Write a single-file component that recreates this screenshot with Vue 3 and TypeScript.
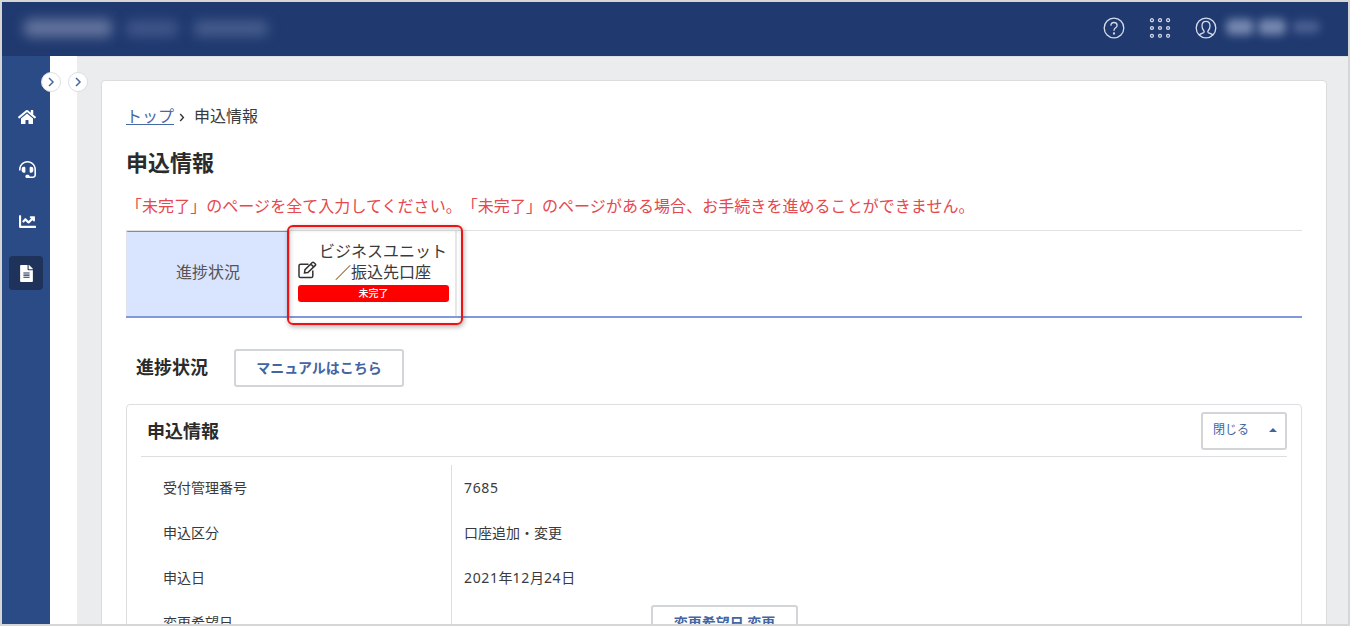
<script setup lang="ts">
interface NavItem {
  name: string
  box: string
  width: number
  height: number
  path: string
  active?: boolean
}

interface DetailRow {
  label: string
  value: string
  button?: string
}

const navItems: NavItem[] = [
  {
    name: 'home',
    box: '0 0 576 512',
    width: 18,
    height: 16,
    path: 'M280.37 148.26L96 300.11V464a16 16 0 0 0 16 16l112.06-.29a16 16 0 0 0 15.92-16V368a16 16 0 0 1 16-16h64a16 16 0 0 1 16 16v95.64a16 16 0 0 0 16 16.05L464 480a16 16 0 0 0 16-16V300L295.67 148.26a12.19 12.19 0 0 0-15.3 0zM571.6 251.47L488 182.56V44.05a12 12 0 0 0-12-12h-56a12 12 0 0 0-12 12v72.61L318.47 43a48 48 0 0 0-61 0L4.34 251.47a12 12 0 0 0-1.6 16.9l25.5 31A12 12 0 0 0 45.15 301l235.22-193.74a12.19 12.19 0 0 1 15.3 0L530.9 301a12 12 0 0 0 16.9-1.6l25.5-31a12 12 0 0 0-1.7-16.93z'
  },
  {
    name: 'support',
    box: '0 0 512 512',
    width: 17,
    height: 17,
    path: 'M192 208c0-17.67-14.33-32-32-32h-16c-35.35 0-64 28.65-64 64v48c0 35.35 28.65 64 64 64h16c17.67 0 32-14.33 32-32V208zm176 144c35.35 0 64-28.65 64-64v-48c0-35.35-28.65-64-64-64h-16c-17.67 0-32 14.33-32 32v112c0 17.67 14.33 32 32 32h16zM256 0C113.18 0 4.58 118.83 0 256v16c0 8.84 7.16 16 16 16h16c8.84 0 16-7.16 16-16v-16c0-114.69 93.31-208 208-208s208 93.31 208 208h-.12c.08 2.43.12 165.72.12 165.72 0 23.35-18.93 42.28-42.28 42.28H320c0-26.51-21.49-48-48-48h-32c-26.51 0-48 21.49-48 48s21.49 48 48 48h181.72c49.86 0 90.28-40.42 90.28-90.28V256C507.42 118.83 398.82 0 256 0z'
  },
  {
    name: 'chart',
    box: '0 0 512 512',
    width: 17,
    height: 17,
    path: 'M496 384H64V80c0-8.84-7.16-16-16-16H16C7.16 64 0 71.16 0 80v336c0 17.67 14.33 32 32 32h464c8.84 0 16-7.16 16-16v-32c0-8.84-7.16-16-16-16zM464 96H345.94c-21.38 0-32.09 25.85-16.97 40.97l32.4 32.4L288 242.75l-73.37-73.37c-12.5-12.5-32.76-12.5-45.25 0l-68.69 68.69c-6.25 6.25-6.25 16.38 0 22.63l22.62 22.62c6.25 6.25 16.38 6.25 22.63 0L192 237.25l73.37 73.37c12.5 12.5 32.76 12.5 45.25 0l96-96 32.4 32.4c15.12 15.12 40.97 4.41 40.97-16.97V112c.01-8.84-7.15-16-16-16z'
  },
  {
    name: 'document',
    box: '0 0 384 512',
    width: 13,
    height: 17,
    path: 'M224 136V0H24C10.7 0 0 10.7 0 24v464c0 13.3 10.7 24 24 24h336c13.3 0 24-10.7 24-24V160H248c-13.2 0-24-10.8-24-24zm64 236c0 6.6-5.4 12-12 12H108c-6.6 0-12-5.4-12-12v-8c0-6.6 5.4-12 12-12h168c6.6 0 12 5.4 12 12v8zm0-64c0 6.6-5.4 12-12 12H108c-6.6 0-12-5.4-12-12v-8c0-6.6 5.4-12 12-12h168c6.6 0 12 5.4 12 12v8zm0-72v8c0 6.6-5.4 12-12 12H108c-6.6 0-12-5.4-12-12v-8c0-6.6 5.4-12 12-12h168c6.6 0 12 5.4 12 12zm96-114.1v6.1H256V0h6.1c6.4 0 12.5 2.5 17 7l97.9 98c4.5 4.5 7 10.6 7 16.9z',
    active: true
  }
]

const rows: DetailRow[] = [
  { label: '受付管理番号', value: '7685' },
  { label: '申込区分', value: '口座追加・変更' },
  { label: '申込日', value: '2021年12月24日' },
  { label: '変更希望日', value: '', button: '変更希望日 変更' }
]

const dots = [3, 11, 19].flatMap((y) => [3, 11.2, 19.4].map((x) => ({ x, y })))

// Separates digits from kanji so digits can be tracked a little wider.
const split = (value: string) =>
  value.split(/(\d+)/).filter(Boolean).map((text) => ({ text, digit: /^\d/.test(text) }))
</script>

<template>
  <div class="frame">
    <header class="topbar">
      <div class="brand">
        <span class="smudge brand-a"></span>
        <span class="smudge brand-b"></span>
        <span class="smudge brand-c"></span>
      </div>
      <div class="tools">
        <svg class="tool" width="22" height="22" viewBox="0 0 22 22">
          <circle cx="11" cy="11" r="9.8" />
          <path d="M7.9 8.7C7.9 6.7 9.2 5.5 11 5.500s3.100 1.200 3.100 2.900c0 2.300-3.100 2.500-3.100 4.900v.5" />
          <circle class="solid" cx="11" cy="16.500" r=".5" />
        </svg>
        <svg class="tool" width="22" height="22" viewBox="0 0 22.4 22">
          <circle v-for="(d, i) in dots" :key="i" :cx="d.x" :cy="d.y" r="1.500" />
        </svg>
        <svg class="tool user" width="22" height="22" viewBox="0 0 22 22">
          <circle cx="11" cy="11" r="9.8" />
          <path d="M4.200 18c1.200-1.500 3.600-1.600 4.700-2.500.6-.6.300-1.300-.2-2C7.500 12.200 7 10.600 7 9c0-2.700 1.500-4.600 4-4.600S15 6.300 15 9c0 1.600-.5 3.200-1.700 4.500-.5.700-.8 1.400-.2 2 1.100.9 3.500 1 4.700 2.500" />
        </svg>
        <div class="account">
          <span class="smudge acc-a"></span>
          <span class="smudge acc-b"></span>
          <span class="smudge acc-c"></span>
        </div>
      </div>
    </header>

    <div class="body">
      <nav class="sidebar">
        <a v-for="item in navItems" :key="item.name" class="nav-item" :class="{ active: item.active }">
          <svg :width="item.width" :height="item.height" :viewBox="item.box"><path :d="item.path" /></svg>
        </a>
        <button class="toggle">
          <svg width="8" height="10" viewBox="0 0 8 10"><path d="M2 1l4 4-4 4" /></svg>
        </button>
      </nav>
      <aside class="drawer">
        <button class="toggle">
          <svg width="8" height="10" viewBox="0 0 8 10"><path d="M2 1l4 4-4 4" /></svg>
        </button>
      </aside>

      <main class="main">
        <section class="card">
          <div class="crumbs">
            <a class="crumb-link">トップ</a>
            <svg width="6" height="9" viewBox="0 0 6 9"><path d="M1.200 1l3.200 3.500L1.200 8" /></svg>
            <span>申込情報</span>
          </div>
          <h1>申込情報</h1>
          <p class="alert">「未完了」のページを全て入力してください。「未完了」のページがある場合、お手続きを進めることができません。</p>

          <div class="tabs">
            <div class="tab current">進捗状況</div>
            <div class="tab unit">
              <div class="unit-row">
                <svg width="19" height="18" viewBox="0 0 19 18">
                  <path d="M10.500 3.200H2.600Q1 3.200 1 4.800v10.100q0 1.600 1.600 1.600h10.600q1.600 0 1.600-1.600V9.500" />
                  <path d="M6.500 11.900l.5-3.200 7.300-7.200q.7-.6 1.400 0l1.600 1.500q.7.700 0 1.400l-7.400 7.200zM12.700 3l3.100 3.100" />
                </svg>
                <span class="unit-name">ビジネスユニット<br />／振込先口座</span>
              </div>
              <span class="badge">未完了</span>
              <div class="highlight"></div>
            </div>
          </div>

          <div class="section-head">
            <h2>進捗状況</h2>
            <button class="btn manual">マニュアルはこちら</button>
          </div>

          <div class="panel">
            <div class="panel-head">
              <h2>申込情報</h2>
              <button class="btn close">
                <span>閉じる</span>
                <svg width="8" height="4" viewBox="0 0 8 4"><path d="M0 4l4-4 4 4z" /></svg>
              </button>
            </div>
            <div class="rows">
              <div v-for="row in rows" :key="row.label" class="row">
                <div class="label">{{ row.label }}</div>
                <div class="value">
                  <span v-for="(part, i) in split(row.value)" :key="i" :class="{ digit: part.digit }">{{ part.text }}</span>
                  <button v-if="row.button" class="btn change">{{ row.button }}</button>
                </div>
              </div>
            </div>
          </div>
        </section>
      </main>
    </div>
  </div>
</template>

<style>
html,
body {
  margin: 0;
  overflow: hidden;
}
</style>

<style scoped>
* {
  box-sizing: border-box;
}
.frame {
  width: 1350px;
  height: 626px;
  border: 2px solid #d6d6d6;
  overflow: hidden;
  display: flex;
  flex-direction: column;
  background: #ebecee;
  color: #3a3a3a;
  font-family: 'Noto Sans', 'Noto Sans CJK JP', sans-serif;
  text-spacing-trim: space-all;
}
svg {
  display: block;
  flex: none;
}
.topbar {
  height: 54px;
  flex: none;
  display: flex;
  align-items: center;
  justify-content: space-between;
  padding: 0 24px 2px 22px;
  background: #203a70;
}
.brand {
  display: flex;
  align-items: center;
}
.smudge {
  display: block;
  border-radius: 6px;
  filter: blur(6px);
}
.brand-a {
  width: 88px;
  height: 18px;
  background: #62729c;
}
.brand-b {
  width: 52px;
  height: 15px;
  margin-left: 14px;
  background: #40568a;
}
.brand-c {
  width: 74px;
  height: 15px;
  margin-left: 16px;
  background: #475d8d;
}
.tools {
  display: flex;
  align-items: center;
}
.tool {
  margin-right: 24px;
  fill: none;
  stroke: #d5dbe9;
  stroke-width: 1.3;
}
.tool.user {
  margin-right: 9px;
}
.solid {
  fill: #d5dbe9;
}
.account {
  display: flex;
  align-items: center;
  width: 98px;
  padding-bottom: 2px;
}
.acc-a,
.acc-b,
.acc-c {
  height: 16px;
  width: 28px;
  filter: blur(4.5px);
  background: #7587ae;
}
.acc-b {
  margin-left: 4px;
}
.acc-c {
  margin-left: 6px;
  height: 12px;
  background: #4b6193;
}
.body {
  flex: 1;
  min-height: 0;
  display: flex;
}
.sidebar {
  position: relative;
  z-index: 2;
  width: 48px;
  flex: none;
  padding: 44px 7px 0;
  display: flex;
  flex-direction: column;
  gap: 18px;
  background: #2b4b87;
}
.nav-item {
  width: 34px;
  height: 34px;
  padding-left: 2px;
  display: flex;
  align-items: center;
  justify-content: center;
  border-radius: 4px;
  fill: #fff;
}
.nav-item.active {
  padding-left: 1px;
  background: #1f3259;
}
.drawer {
  position: relative;
  z-index: 1;
  width: 27px;
  flex: none;
  background: #fff;
}
.toggle {
  position: absolute;
  top: 16px;
  right: -11px;
  width: 20px;
  height: 20px;
  padding: 0;
  display: flex;
  align-items: center;
  justify-content: center;
  border: 1px solid #dbdfe5;
  border-radius: 50%;
  background: #fff;
}
.toggle path {
  fill: none;
  stroke: #4868a4;
  stroke-width: 1.5;
}
.main {
  flex: 1;
  min-width: 0;
  padding: 23px 21px 0 24px;
  border-top: 1px solid #dcdee6;
}
.card {
  height: 640px;
  padding: 22px 24px 0;
  border: 1px solid #dadcde;
  border-radius: 4px;
  background: #fff;
}
.crumbs {
  height: 26px;
  display: flex;
  align-items: center;
  font-size: 16px;
  line-height: 26px;
}
.crumb-link {
  height: 18px;
  line-height: 18px;
  border-bottom: 1px solid #4868a4;
  color: #4868a4;
}
.crumbs svg {
  margin: 3px 9px 0 5px;
  fill: none;
  stroke: #333;
  stroke-width: 1.4;
}
h1,
h2 {
  margin: 0;
  color: #2b2b2b;
  font-weight: 700;
}
h1 {
  margin-top: 16px;
  font-size: 22px;
  line-height: 34px;
}
.alert {
  margin: 15px 0 0;
  height: 36px;
  font-size: 16px;
  line-height: 24px;
  letter-spacing: 0.05px;
  white-space: nowrap;
  color: #e5484d;
}
.tabs {
  height: 88px;
  display: flex;
  border-top: 1px solid #e0e1e3;
  border-bottom: 2px solid #8199dc;
}
.tab.current {
  width: 162px;
  display: flex;
  align-items: center;
  justify-content: center;
  padding-bottom: 7px;
  border-top: 1px solid #7089d4;
  border-left: 2px solid #e0e4ee;
  background: #d9e4ff;
  font-size: 16px;
  color: #555;
}
.tab.unit {
  position: relative;
  width: 169px;
  padding: 10px 6px 0 8px;
  border-left: 2px solid #dcdcdc;
  border-right: 2px solid #e6e6e6;
}
.unit-row {
  display: flex;
  align-items: flex-end;
  justify-content: space-between;
}
.unit-row svg {
  margin-bottom: 4px;
  fill: none;
  stroke: #333;
  stroke-width: 1.5;
}
.unit-name {
  width: 130px;
  margin-right: 1px;
  font-size: 16px;
  line-height: 21px;
  text-align: center;
  white-space: nowrap;
}
.badge {
  display: block;
  height: 17px;
  margin-top: 2px;
  border-radius: 3px;
  background: #f00;
  color: #fff;
  font-size: 10px;
  font-weight: 500;
  line-height: 17px;
  text-align: center;
}
.highlight {
  position: absolute;
  top: -6px;
  left: -3px;
  width: 176px;
  height: 100px;
  border: 2px solid #ee1212;
  border-radius: 6px;
  box-shadow: 1px 2px 5px rgba(0, 0, 0, 0.3), inset 1px 2px 5px rgba(0, 0, 0, 0.2);
}
.section-head {
  margin: 31px 0 17px 10px;
  display: flex;
  align-items: center;
  height: 38px;
}
.section-head h2 {
  padding-bottom: 2px;
}
h2 {
  font-size: 18px;
  line-height: 34px;
}
.btn {
  padding: 0 0 2px;
  border: 2px solid #d2d5d8;
  border-radius: 3px;
  background: #fff;
  color: #4365a3;
  font-family: inherit;
  font-weight: 700;
  font-size: 14px;
}
.manual {
  width: 170px;
  height: 38px;
  margin-left: 26px;
}
.panel {
  height: 300px;
  padding: 0 14px;
  border: 1px solid #dcdee0;
  border-radius: 4px;
}
.panel-head {
  height: 52px;
  display: flex;
  align-items: center;
  justify-content: space-between;
  padding-left: 6px;
  border-bottom: 1px solid #dcdee0;
}
.close {
  width: 86px;
  height: 38px;
  display: flex;
  align-items: center;
  justify-content: space-between;
  padding: 0 8px 1px 10px;
  font-size: 12px;
  font-weight: 400;
}
.close span {
  padding-bottom: 2px;
}
.close path {
  fill: #4063a2;
}
.rows {
  margin-top: 8px;
}
.row {
  height: 45px;
  display: flex;
  font-size: 14px;
  line-height: 45px;
}
.label {
  width: 311px;
  padding-left: 22px;
  border-right: 1px solid #dcdee0;
}
.value {
  padding-left: 12px;
  display: flex;
  align-items: center;
}
.digit {
  letter-spacing: 0.64px;
}
.change {
  width: 147px;
  height: 37px;
  margin: 1px 0 0 187px;
  padding-bottom: 3px;
}
</style>
